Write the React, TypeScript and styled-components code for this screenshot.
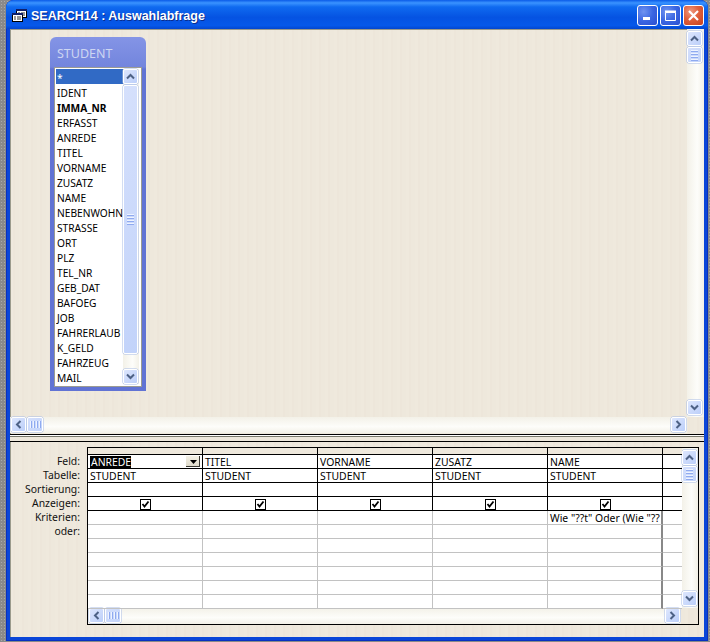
import { createGlobalStyle } from "styled-components";
import styled from "styled-components";

const Global = createGlobalStyle`
  html, body {
    margin: 0;
    padding: 0;
  }
  body {
    width: 710px;
    height: 642px;
    overflow: hidden;
    background-color: #8a8a8a;
    background-image: radial-gradient(#a9a9a9 0.6px, transparent 0.8px);
    background-size: 3px 3px;
    font: 11px/14px "Noto Sans", "Liberation Sans", sans-serif;
    color: #000;
  }
`

const Desktop = styled.div`
  width: 710px;
  height: 642px;
  padding: 0 2px 1px 6px;
  box-sizing: border-box;
  display: flex;
`

const Win = styled.div`
  flex: 1;
  min-width: 0;
  display: flex;
  flex-direction: column;
  border-radius: 8px 8px 0 0;
  background: #0a46d8;
  box-shadow: inset 1px 0 #0831c0, inset -1px 0 #0831c0, inset 0 -1px #0831c0;
`

const TitleBar = styled.div`
  height: 29px;
  flex: none;
  display: flex;
  align-items: center;
  padding: 2px 4px 0 6px;
  box-sizing: border-box;
  border-radius: 8px 8px 0 0;
  background: linear-gradient(180deg, #0a5be8 0%, #3a93ff 10%, #0f6af0 24%, #0553e2 60%, #0658ea 88%, #0346cf 100%);
`

const TitleText = styled.div`
  flex: 1;
  margin-left: 3px;
  font: 700 12.5px/16px "Liberation Sans", sans-serif;
  color: #fff;
  text-shadow: 1px 1px #0a2c8c;
`

const WinBtns = styled.div`
  display: flex;
  gap: 2px;
`

const WinBtn = styled.button<{ $close?: boolean }>`
  width: 21px;
  height: 21px;
  padding: 0;
  display: flex;
  align-items: center;
  justify-content: center;
  border: 1px solid #fff;
  border-radius: 3px;
  background: ${p => p.$close
    ? 'radial-gradient(circle at 35% 30%, #ee9a80 0%, #e0603c 45%, #c8401c 100%)'
    : 'radial-gradient(circle at 30% 30%, #6f93f0 0%, #3a66e2 50%, #2a4fd0 100%)'};
`

const Client = styled.div`
  flex: 1;
  min-height: 0;
  margin: 0 4px 4px 4px;
  display: flex;
  flex-direction: column;
  background: #eee8dc;
  background-image: repeating-linear-gradient(90deg, #efe9dd 0 3px, #ede6da 3px 5px, #eee8dc 5px 9px);
  box-shadow: inset 1px 1px #9a9a8c;
`

const UpperPane = styled.div`
  height: 404px;
  flex: none;
  display: flex;
  flex-direction: column;
`

const UpperBody = styled.div`
  flex: 1;
  min-height: 0;
  display: flex;
`

const Canvas = styled.div`
  flex: 1;
  min-width: 0;
  padding: 8px 0 0 40px;
`

const TableCard = styled.div`
  width: 96px;
  height: 354px;
  box-sizing: border-box;
  padding: 0 4px 4px 4px;
  display: flex;
  flex-direction: column;
  border-radius: 6px 6px 0 0;
  background: linear-gradient(180deg, #8494e6 0, #7385dd 30px, #6173d4 32px);
`

const TableTitle = styled.div`
  height: 30px;
  flex: none;
  padding: 4px 0 0 3px;
  box-sizing: border-box;
  display: flex;
  align-items: center;
  font: 12.5px/14px "Noto Sans", sans-serif;
  color: #cdd6f2;
`

const TableBody = styled.div`
  flex: 1;
  min-height: 0;
  display: flex;
  background: #fff;
  border: 1px solid #9b9b93;
  padding: 1px 2px 2px 1px;
`

const FieldList = styled.div`
  width: 67px;
  flex: none;
  display: flex;
  flex-direction: column;
`

const FieldRow = styled.div<{ $selected?: boolean; $key?: boolean }>`
  height: 15px;
  flex: none;
  padding-left: 1px;
  line-height: 19px;
  font-size: 10.2px;
  font-weight: ${p => p.$key ? 700 : 400};
  white-space: nowrap;
  overflow: hidden;
  background: ${p => p.$selected ? '#316ac5' : 'transparent'};
  color: ${p => p.$selected ? '#fff' : '#000'};
`

const VBar = styled.div<{ $w?: number; $flush?: boolean }>`
  width: ${p => p.$w ?? 16}px;
  flex: none;
  display: flex;
  flex-direction: column;
  gap: 1px;
  padding: ${p => p.$flush ? '0' : '2px 0'};
  box-sizing: border-box;
  background: linear-gradient(90deg, #f3f1e8, #fdfdfa 60%, #f3f1e8);
`

const HBar = styled.div<{ $inset?: number; $grow?: boolean }>`
  height: 16px;
  flex: ${p => p.$grow ? 1 : 'none'};
  margin-right: ${p => p.$inset ?? 0}px;
  display: flex;
  gap: 1px;
  padding: 0 1px;
  box-sizing: border-box;
  background: linear-gradient(180deg, #f3f1e8, #fdfdfa 60%, #f3f1e8);
`

const ScrollBtn = styled.div`
  width: 15px;
  height: 15px;
  flex: none;
  display: flex;
  align-items: center;
  justify-content: center;
  box-sizing: border-box;
  border: 1px solid #fff;
  border-radius: 2px;
  background: linear-gradient(135deg, #dde6fd, #bccffa);
  box-shadow: 0 0 0 0.5px #a8bbe6;
`

const Thumb = styled.div<{ $size?: number; $horizontal?: boolean }>`
  ${p => p.$horizontal
    ? `width: ${p.$size ?? 16}px; height: 15px;`
    : `height: ${p.$size ?? 16}px; width: 15px;`}
  flex: none;
  display: flex;
  flex-direction: ${p => p.$horizontal ? 'row' : 'column'};
  align-items: center;
  justify-content: center;
  gap: 1px;
  box-sizing: border-box;
  border: 1px solid #fff;
  border-radius: 2px;
  background: linear-gradient(135deg, #d5e0fc, #c2d3fa);
  box-shadow: 0 0 0 0.5px #a8bbe6;
`

const Grip = styled.span<{ $horizontal?: boolean }>`
  display: block;
  background: #eef3ff;
  border-${p => p.$horizontal ? 'right' : 'bottom'}: 1px solid #8faaf0;
  ${p => p.$horizontal ? 'width: 1px; height: 7px;' : 'height: 1px; width: 7px;'}
`

const Spacer = styled.div`
  flex: 1;
`

const Splitter = styled.div`
  height: 8px;
  flex: none;
  box-sizing: border-box;
  margin-top: 1px;
  background: #eee8dc;
  border-top: 1px solid #000;
  border-bottom: 1px solid #000;
  box-shadow: inset 0 1px #fff, inset 0 2px #77776c;
`

const LowerPane = styled.div`
  flex: 1;
  min-height: 0;
  display: flex;
  padding: 5px 5px 12px 0;
`

const Labels = styled.div`
  width: 77px;
  flex: none;
  box-sizing: border-box;
  padding: 7px 7px 0 0;
  text-align: right;
  font-size: 10.4px;
  color: #111;
`

const Label = styled.div`
  height: 14px;
  line-height: 14px;
`

const GridBox = styled.div`
  flex: 1;
  min-width: 0;
  display: flex;
  flex-direction: column;
  border: 1px solid #000;
`

const GridTop = styled.div`
  flex: 1;
  min-height: 0;
  display: flex;
`

const GridTable = styled.div`
  flex: 1;
  min-width: 0;
  display: grid;
  grid-template-columns: repeat(5, 115px) 1fr;
  grid-template-rows: 7px repeat(11, 14px);
  background: #fff;
  align-content: start;
`

const Cell = styled.div<{ $strong?: boolean; $last?: boolean; $end?: boolean; $center?: boolean; $head?: boolean }>`
  position: relative;
  box-sizing: border-box;
  min-width: 0;
  padding: 1px ${p => p.$center ? '2px' : '0'} 0 2px;
  overflow: hidden;
  white-space: nowrap;
  font-size: 10.4px;
  line-height: 13px;
  display: flex;
  align-items: center;
  justify-content: ${p => p.$center ? 'center' : 'flex-start'};
  background: ${p => p.$head ? '#eee8dc' : 'transparent'};
  border-bottom: 1px solid ${p => p.$strong ? '#000' : '#c2c2c2'};
  border-right: ${p => p.$end ? 'none' : p.$last ? '2px solid #888' : `1px solid ${p.$strong ? '#000' : '#c2c2c2'}`};
`

const Selected = styled.span`
  background: #000;
  color: #fff;
  padding: 0 0 0 1px;
`

const DropBtn = styled.div`
  position: absolute;
  top: 1px;
  right: 2px;
  width: 14px;
  height: 11px;
  display: flex;
  align-items: center;
  justify-content: center;
  background: linear-gradient(180deg, #f4f1e6, #dcd8c8);
  box-shadow: inset -1px -1px #3a3a34;
`

const Check = styled.div`
  width: 11px;
  height: 11px;
  box-sizing: border-box;
  border: 1px solid #000;
  background: #fff;
  display: flex;
  align-items: center;
  justify-content: center;
`

const GridBottom = styled.div`
  height: 16px;
  flex: none;
  display: flex;
  padding-right: 17px;
`

const Chevron = ({ dir }: { dir: 'up' | 'down' | 'left' | 'right' }) => {
  const rotate = { up: 0, right: 90, down: 180, left: 270 }[dir]
  return (
    <svg width="9" height="9" viewBox="0 0 9 9" style={{ transform: `rotate(${rotate}deg)` }}>
      <path d="M1 6.5 L4.5 3 L8 6.5" fill="none" stroke="#4d6185" strokeWidth="2" />
    </svg>
  )
}

const FormWindow = ({ x, y }: { x: number; y: number }) => (
  <g transform={`translate(${x} ${y})`}>
    <rect x="0.5" y="0.5" width="10" height="8" fill="#fff" stroke="#000" />
    <rect x="0" y="0" width="11" height="2" fill="#10206a" />
    <rect x="2" y="3.5" width="2" height="1" fill="#333" />
    <rect x="5" y="3.5" width="4" height="1" fill="#333" />
    <rect x="2" y="5.5" width="2" height="1" fill="#333" />
    <rect x="5" y="5.5" width="4" height="1" fill="#333" />
  </g>
)

const FormIcon = () => (
  <svg width="16" height="13" viewBox="0 0 16 13">
    <FormWindow x={4} y={0} />
    <FormWindow x={0} y={4} />
  </svg>
)

const fields = [
  '*', 'IDENT', 'IMMA_NR', 'ERFASST', 'ANREDE', 'TITEL', 'VORNAME', 'ZUSATZ', 'NAME',
  'NEBENWOHN', 'STRASSE', 'ORT', 'PLZ', 'TEL_NR', 'GEB_DAT', 'BAFOEG', 'JOB',
  'FAHRERLAUB', 'K_GELD', 'FAHRZEUG', 'MAIL',
]

const labels = ['Feld:', 'Tabelle:', 'Sortierung:', 'Anzeigen:', 'Kriterien:', 'oder:']
const columns = ['ANREDE', 'TITEL', 'VORNAME', 'ZUSATZ', 'NAME']
const range = (n: number) => Array.from({ length: n }, (_, i) => i)

const Grips = ({ horizontal }: { horizontal?: boolean }) => (
  <>{range(4).map(i => <Grip key={i} $horizontal={horizontal} />)}</>
)

const App = () => {
  const strongCells = (row: number, render: (col: number) => React.ReactNode, center?: boolean) =>
    range(6).map(col => (
      <Cell key={`${row}_${col}`} $strong $center={center && col < 5} $end={col === 5}>
        {col < 5 ? render(col) : null}
      </Cell>
    ))

  return <>
    <Global />
    <Desktop>
      <Win>
        <TitleBar>
          <FormIcon />
          <TitleText>SEARCH14 : Auswahlabfrage</TitleText>
          <WinBtns>
            <WinBtn>
              <svg width="13" height="13" viewBox="0 0 13 13">
                <rect x="2" y="8" width="7" height="3" fill="#fff" />
              </svg>
            </WinBtn>
            <WinBtn>
              <svg width="13" height="13" viewBox="0 0 13 13">
                <path d="M1.5 3.5 H11.5 V11.5 H1.5 Z" fill="none" stroke="#fff" />
                <rect x="1" y="1.5" width="11" height="2" fill="#fff" />
              </svg>
            </WinBtn>
            <WinBtn $close>
              <svg width="13" height="13" viewBox="0 0 13 13">
                <path d="M2 2 L11 11 M11 2 L2 11" stroke="#fff" strokeWidth="2.2" />
              </svg>
            </WinBtn>
          </WinBtns>
        </TitleBar>
        <Client>
          <UpperPane>
            <UpperBody>
              <Canvas>
                <TableCard>
                  <TableTitle>STUDENT</TableTitle>
                  <TableBody>
                    <FieldList>
                      {fields.map((e, i) => (
                        <FieldRow key={e} $selected={i === 0} $key={e === 'IMMA_NR'}>{e}</FieldRow>
                      ))}
                    </FieldList>
                    <VBar $flush>
                      <ScrollBtn><Chevron dir="up" /></ScrollBtn>
                      <Thumb $size={269}><Grips /></Thumb>
                      <Spacer />
                      <ScrollBtn><Chevron dir="down" /></ScrollBtn>
                    </VBar>
                  </TableBody>
                </TableCard>
              </Canvas>
              <VBar $w={17}>
                <ScrollBtn><Chevron dir="up" /></ScrollBtn>
                <Thumb><Grips /></Thumb>
                <Spacer />
                <ScrollBtn><Chevron dir="down" /></ScrollBtn>
              </VBar>
            </UpperBody>
            <HBar $inset={17}>
              <ScrollBtn><Chevron dir="left" /></ScrollBtn>
              <Thumb $horizontal><Grips horizontal /></Thumb>
              <Spacer />
              <ScrollBtn><Chevron dir="right" /></ScrollBtn>
            </HBar>
          </UpperPane>
          <Splitter />
          <LowerPane>
            <Labels>
              {labels.map(e => <Label key={e}>{e}</Label>)}
            </Labels>
            <GridBox>
              <GridTop>
                <GridTable>
                  {range(6).map(col => <Cell key={`head_${col}`} $strong $head $end={col === 5} />)}
                  {strongCells(0, col => col === 0
                    ? <><Selected>{columns[0]}</Selected><DropBtn>
                        <svg width="7" height="4" viewBox="0 0 7 4"><path d="M0 0 H7 L3.5 4 Z" fill="#000" /></svg>
                      </DropBtn></>
                    : columns[col])}
                  {strongCells(1, () => 'STUDENT')}
                  {strongCells(2, () => null)}
                  {strongCells(3, () => (
                    <Check>
                      <svg width="9" height="9" viewBox="0 0 9 9">
                        <path d="M1.5 4 L3.5 6.5 L7.5 1.5" fill="none" stroke="#000" strokeWidth="1.8" />
                      </svg>
                    </Check>
                  ), true)}
                  {range(7).flatMap(row => range(6).map(col => (
                    <Cell key={`rest_${row}_${col}`} $last={col === 4} $end={col === 5}>
                      {row === 0 && col === 4 ? 'Wie "??t" Oder (Wie "??' : null}
                    </Cell>
                  )))}
                </GridTable>
                <VBar>
                  <ScrollBtn><Chevron dir="up" /></ScrollBtn>
                  <Thumb><Grips /></Thumb>
                  <Spacer />
                  <ScrollBtn><Chevron dir="down" /></ScrollBtn>
                </VBar>
              </GridTop>
              <GridBottom>
                <HBar $grow>
                  <ScrollBtn><Chevron dir="left" /></ScrollBtn>
                  <Thumb $horizontal><Grips horizontal /></Thumb>
                  <Spacer />
                  <ScrollBtn><Chevron dir="right" /></ScrollBtn>
                </HBar>
              </GridBottom>
            </GridBox>
          </LowerPane>
        </Client>
      </Win>
    </Desktop>
  </>
}

export default App
